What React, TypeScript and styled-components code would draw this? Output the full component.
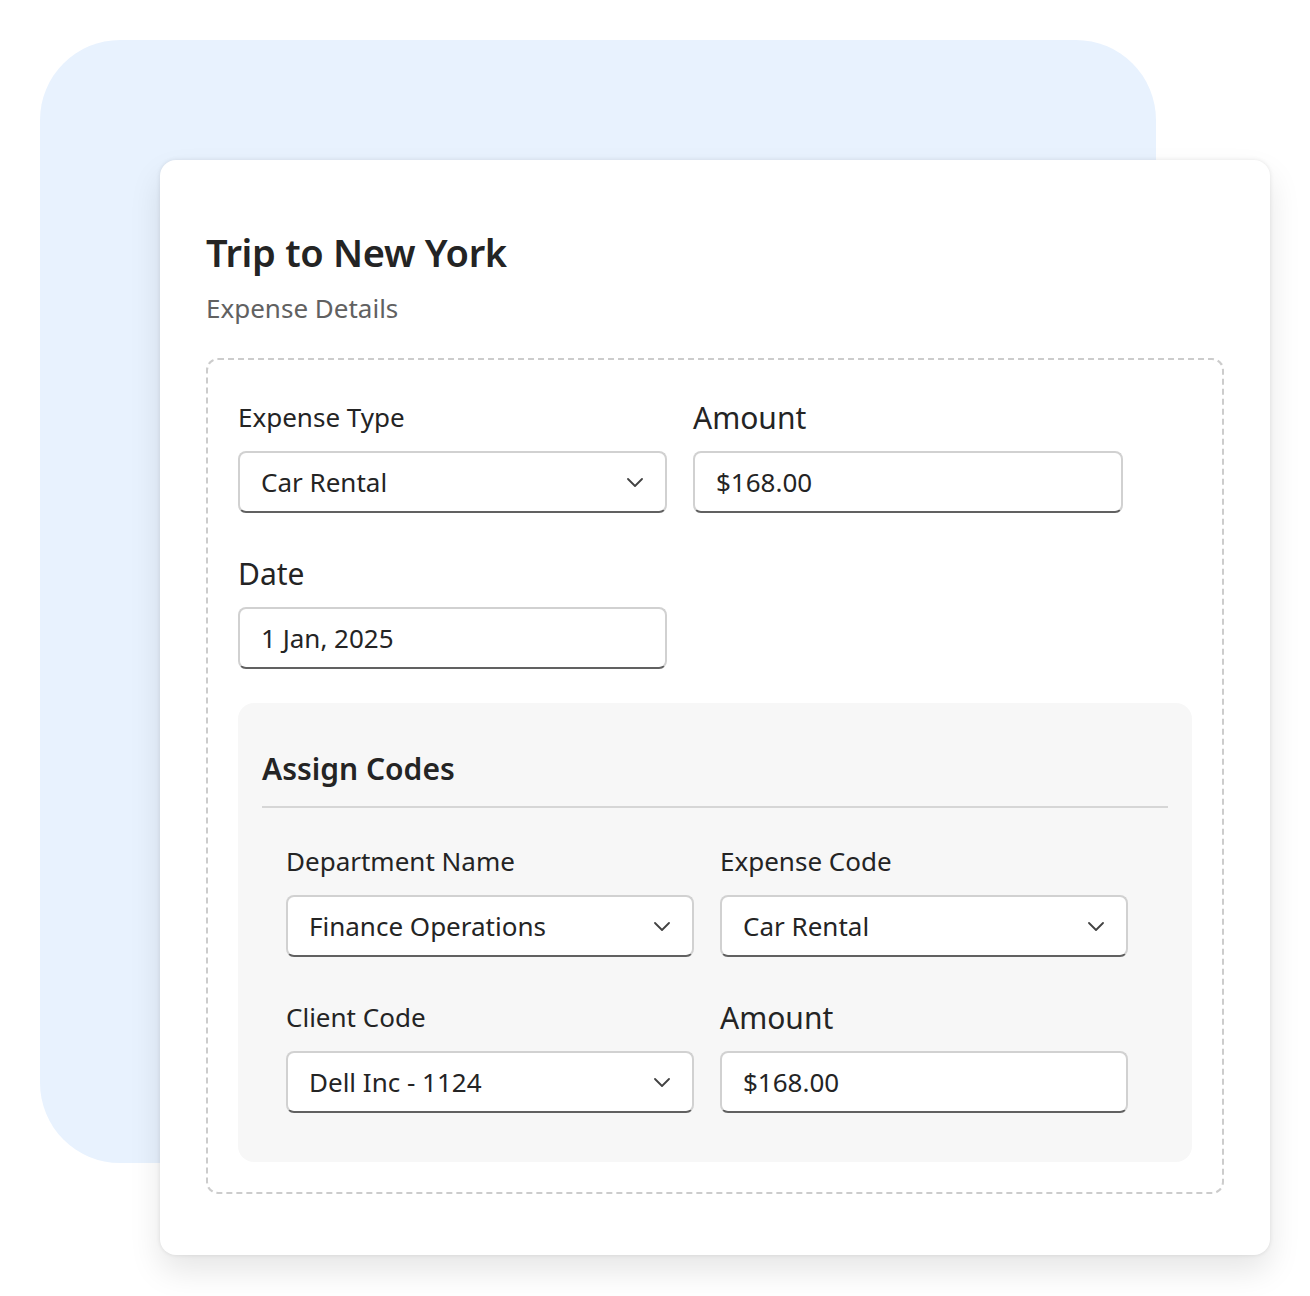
import styled, { createGlobalStyle } from 'styled-components'

const GlobalStyle = createGlobalStyle`
  body {
    margin: 0;
    background: #ffffff;
    font-family: "Noto Sans", "Open Sans", sans-serif;
    color: #242424;
  }
`

const Stage = styled.div`
  position: relative;
  width: 1310px;
  height: 1296px;
  box-sizing: border-box;
  padding: 160px 0 0 160px;
  overflow: hidden;
`

const Backdrop = styled.div`
  position: absolute;
  top: 40px;
  left: 40px;
  width: 1116px;
  height: 1123px;
  border-radius: 80px;
  background: #e8f2fe;
`

const Card = styled.section`
  position: relative;
  width: 1110px;
  box-sizing: border-box;
  padding: 64px 46px 61px;
  background: #ffffff;
  border-radius: 16px;
  box-shadow: 0 0 4px rgba(0, 0, 0, 0.1), 0 16px 32px rgba(0, 0, 0, 0.1);
`

const Title = styled.h1`
  margin: 0;
  font-size: 38px;
  line-height: 56px;
  font-weight: 600;
  letter-spacing: -0.3px;
  color: #242424;
`

const Subtitle = styled.p`
  margin: 8px 0 30px;
  font-size: 26px;
  line-height: 40px;
  color: #616161;
`

const DashedBox = styled.div`
  border: 2px dashed #cccccc;
  border-radius: 12px;
  padding: 37px 30px 30px;
`

const Grid = styled.div<{ $cols: string; $pad: string }>`
  display: grid;
  grid-template-columns: ${(p) => p.$cols};
  column-gap: 26px;
  row-gap: 40px;
  padding: ${(p) => p.$pad};
`

const Field = styled.div`
  display: flex;
  flex-direction: column;
  gap: 14px;
`

const Label = styled.label<{ $large?: boolean }>`
  height: 40px;
  display: flex;
  align-items: center;
  font-size: ${(p) => (p.$large ? '30px' : '26px')};
  color: #242424;
`

const Control = styled.div`
  height: 62px;
  box-sizing: border-box;
  display: flex;
  align-items: center;
  justify-content: space-between;
  padding: 0 22px 0 21px;
  background: #ffffff;
  border: 2px solid #d1d1d1;
  border-bottom-color: #616161;
  border-radius: 8px;
  font-size: 26px;
  color: #242424;
`

const CodesPanel = styled.div`
  margin-top: 34px;
  background: #f7f7f7;
  border-radius: 16px;
  padding: 44px 24px 49px;
`

const PanelTitle = styled.h2`
  margin: 0;
  font-size: 30px;
  line-height: 44px;
  font-weight: 600;
  color: #242424;
`

const Divider = styled.hr`
  margin: 15px 0 33px;
  border: 0;
  height: 2px;
  background: #d6d6d6;
`

const Chevron = () => (
  <svg width="16" height="9" viewBox="0 0 16 9" fill="none">
    <polyline points="1,1 8,8 15,1" stroke="#424242" strokeWidth="1.8" strokeLinecap="round" strokeLinejoin="round" />
  </svg>
)

interface FieldProps {
  label: string
  value: string
  large?: boolean
  select?: boolean
}

const FormField = ({ label, value, large, select }: FieldProps) => (
  <Field>
    <Label $large={large}>{label}</Label>
    <Control>
      <span>{value}</span>
      {select && <Chevron />}
    </Control>
  </Field>
)

export default function App() {
  return (
    <>
      <GlobalStyle />
      <Stage>
        <Backdrop />
        <Card>
          <Title>Trip to New York</Title>
          <Subtitle>Expense Details</Subtitle>
          <DashedBox>
            <Grid $cols="429px 430px" $pad="0">
              <FormField label="Expense Type" value="Car Rental" select />
              <FormField label="Amount" value="$168.00" large />
              <FormField label="Date" value="1 Jan, 2025" large />
            </Grid>
            <CodesPanel>
              <PanelTitle>Assign Codes</PanelTitle>
              <Divider />
              <Grid $cols="408px 408px" $pad="0 0 0 24px">
                <FormField label="Department Name" value="Finance Operations" select />
                <FormField label="Expense Code" value="Car Rental" select />
                <FormField label="Client Code" value="Dell Inc - 1124" select />
                <FormField label="Amount" value="$168.00" large />
              </Grid>
            </CodesPanel>
          </DashedBox>
        </Card>
      </Stage>
    </>
  )
}
